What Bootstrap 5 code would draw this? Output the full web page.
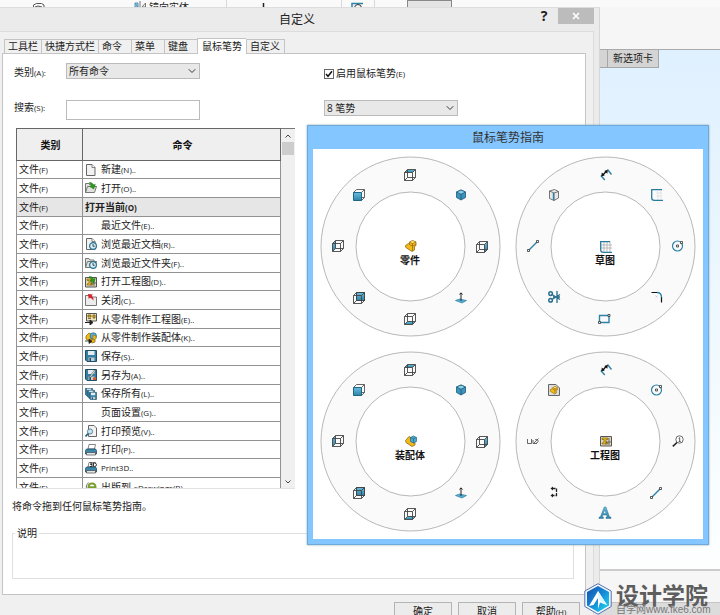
<!DOCTYPE html>
<html lang="zh-CN">
<head>
<meta charset="utf-8">
<meta name="viewport" content="width=device-width, initial-scale=1">
<title>自定义</title>
<link href="https://cdn.jsdelivr.net/npm/bootstrap@5.3.0/dist/css/bootstrap.min.css" rel="stylesheet">
<style>
body{font:10px/14px "Open Sans","Noto Sans CJK SC",sans-serif;color:#222;background:#f6f6f6}
button{font:inherit;color:inherit}
svg{display:block;flex:none}
.desk{min-height:100vh;overflow:hidden}
.ribbon{height:50px;background:#f6f6f6;border-bottom:1px solid #aaa}
.ribbon-strip{height:7px;background:#fafafa;padding-left:32px;color:#222}
.ribbon-strip .sep{width:1px;height:7px;background:#d8d8d8}
.ribbon-strip .pressed{width:45px;height:7px;background:#e4e4e4;border:1px solid #888;border-bottom:0}
.ribbon-strip .tool{line-height:14px;width:77px;height:7px}
.canvas{background:linear-gradient(#dff0ff,#f0f9ff 55%,#fdffff)}
.doc-tabs{padding-left:599px}
.doc-tab{background:#d4d4d4;border:1px solid #a6a6a6;border-width:0 1px 1px 0;height:18px;padding:0 5px;line-height:16px}
.status-a{height:33px;background:#f6f6f6;border-top:2px solid #ccc}
.status-b{height:13px;background:#dcdcdc;border-top:1px solid #c4c4c4}
.dlg{top:7px;left:0;right:120px;bottom:0;background:#ebebeb;border-top:1px solid #ddd;border-right:1px solid #d6d6d6;padding-right:5px}
.dlg-title{height:23px;font-size:12px}
.dlg-title h1{font-size:12px;line-height:23px;font-weight:400;margin:0 auto}
.title-tools{right:0;top:0}
.title-tools button{border:0;background:transparent;padding:0}
.help{width:20px;font:bold 14px/16px "Noto Sans",sans-serif!important}
.title-tools .close-x{width:36px;height:16px;background:#bcbcbc;color:#fff}
.dlg-body{background:#f0f0f0;border:1px solid #dcdcdc;border-left:0;padding:6px 7px 0 2px}
.tabs{height:15px;padding-left:2px}
.tabs button{min-width:33px;height:14px;border:1px solid #c4c4c4;border-width:1px 0 0 1px;background:#f0f0f0;padding:0 3px;line-height:13px;text-align:left;color:#222;border-radius:0}
.tabs button:last-child{border-right-width:1px;padding-right:4px}
.tabs button.active{background:#fff;height:16px;margin-bottom:-1px;padding:0 4px;position:relative}
.panel{background:#fff;border:1px solid #c4c4c4;padding:9px 11px 15px 9px}
.opts{display:grid;grid-template-columns:52px 134px 1fr;row-gap:19px;padding-left:2px;align-items:start}
.opts .right{padding-left:124px}
.hk{font-size:8px}
.opts .form-select,.opts .form-control{font-size:10px;line-height:13px;border:1px solid #bbb;border-radius:0;color:#222;min-height:0}
.opts .form-select{height:16px;padding:0 16px 0 2px;width:134px;background-color:#e8e8e8;background-size:8px 8px;background-position:right 3px center}
.opts .form-control{height:20px;padding:2px 4px}
.opts label{padding-top:2px}
.opts .find-label{padding-top:0}
.opts .tick{appearance:none;width:10px;height:10px;margin:0 2px 0 0;border:1px solid #666;background:#fff center/8px no-repeat url("data:image/svg+xml,%3Csvg xmlns='http://www.w3.org/2000/svg' viewBox='0 0 8 8'%3E%3Cpath d='M1 4l2 2.3L7 1.3' fill='none' stroke='%23111' stroke-width='1.5'/%3E%3C/svg%3E")}
.tick-row{padding-top:3px}
.opts .tick-row label{padding-top:0}
.list{width:279px;height:361px;margin:8px 0 0 4px;border-bottom:1px solid #e2e2e2;overflow:hidden}
.cmds{table-layout:fixed;border-collapse:collapse;width:265px;flex:none;align-self:flex-start}
.cmds th,.cmds td{border:1px solid #929292;padding:0 0 0 2px;line-height:14px;height:19px;white-space:nowrap}
.cmds th{height:32px;background:#efefef;text-align:center;border-color:#666;color:#111}
.cmds tbody tr:nth-child(3n+1) td{height:18px}
.cmds tr.group td{background:#e6e6e6}
.cmds col:first-child{width:66px}
.cmds .cmd{display:flex;align-items:center;gap:4px}
.cmds .cmd svg,.cmds .noicon{width:12px;height:12px;flex:none}
.scroll{background:#f0f0f0;border-top:1px solid #777}
.scroll button{border:0;background:transparent;padding:0;height:13px;display:flex;align-items:center;justify-content:center}
.thumb{height:13px;background:#cdcdcd;margin:0 1px}
.note{margin:10px 0 0}
.desc{border:1px solid #e0e0e0;height:53px;margin:13px 0 0}
.desc legend{float:none;width:auto;font-size:10px;line-height:14px;margin:0 0 0 2px;padding:0 2px;background:#fff}
.actions{padding:7px 6px 0 0;gap:6px}
.actions button{width:58px;height:18px;border:1px solid #b4b4b4;background:#ececec;border-radius:0;padding:0;line-height:14px;color:#222}
.guide{left:307px;top:125px;width:402px;background:#84c6ff;border:1px solid #6fa8da;padding:0 5px 5px;box-shadow:0 0 2px #8aa}
.guide h2{font-size:12px;line-height:23px;font-weight:400;margin:0;text-align:center;color:#333}
.rings{display:grid;grid-template-columns:1fr 1fr;background:#fff}
.rings svg{width:100%;height:auto}
.rings text{font-weight:700;font-size:10px;text-anchor:middle;fill:#111}
.brand{right:4px;bottom:0;width:132px;color:#5d5d5d}
.brand-name{font:bold 23px/22px "Noto Sans CJK SC",sans-serif}
.brand-url{font:10px/10px "Liberation Sans","Noto Sans CJK SC",sans-serif;color:#777;white-space:nowrap}
</style>
<script src="https://cdn.jsdelivr.net/npm/bootstrap@5.3.0/dist/js/bootstrap.bundle.min.js"></script>
</head>
<body>
<svg width="0" height="0" class="position-absolute" aria-hidden="true">
<defs>
<linearGradient id="teal" x2="0" y2="1"><stop stop-color="#68bddf"/><stop offset="1" stop-color="#2e83a8"/></linearGradient>
<linearGradient id="logo" x2="1" y2="1"><stop stop-color="#1550a8"/><stop offset=".5" stop-color="#1689d8"/><stop offset="1" stop-color="#20e0f0"/></linearGradient>
<g id="wire" fill="none" stroke="#444" stroke-width=".9"><path d="M.5 3.5h8v8h-8zM3.5.5h8v8h-8zM.5 3.5l3-3M8.5 3.5l3-3M8.5 11.5l3-3M.5 11.5l3-3"/></g>
<g id="c-top"><path d="M.5 3.5l3-3h8l-3 3z" fill="url(#teal)"/><use href="#wire"/></g>
<g id="c-bottom"><path d="M.5 11.5l3-3h8l-3 3z" fill="url(#teal)"/><use href="#wire"/></g>
<g id="c-left"><path d="M.5 3.5l3-3v8l-3 3z" fill="url(#teal)"/><use href="#wire"/></g>
<g id="c-right"><path d="M8.5 3.5l3-3v8l-3 3z" fill="url(#teal)"/><use href="#wire"/></g>
<g id="c-front"><path d="M3.5.5h8v8h-3M3.5.5l-3 3M8.5 3.5l3-3M11.5 8.5l-3 3" fill="none" stroke="#555" stroke-width=".9"/><path d="M.5 3.5h8v8h-8z" fill="url(#teal)" stroke="#1d6684"/></g>
<g id="c-back"><path d="M3.5.5h8v8h-8z" fill="url(#teal)" stroke="#1d6684"/><use href="#wire"/></g>
<g id="c-iso" stroke="#1c5c7c" stroke-width=".8"><path d="M6 1l4.5 2v5.500L6 11 1.500 8.500V3z" fill="#3d93ba"/><path d="M6 1l4.500 2L6 5.300 1.500 3z" fill="#8bd0ea"/><path d="M6 5.300V11"/></g>
<g id="normal"><path d="M.5 8.500l4-1.500 7 1.500-4.500 2.500z" fill="#55aed0" stroke="#2c7fa3" stroke-width=".7"/><path d="M6 9V1M4.500 2.500L6 .8l1.500 1.700" fill="none" stroke="#222"/></g>
<g id="part"><path d="M.5 5.500l3-2 1 1V2l3-1.500L11 2v3.500l-1.500 1V10L7 11.500.8 7.500z" fill="#f0b91c" stroke="#94690a" stroke-width=".8"/><path d="M4.500 4.500L7.500 6v5M7.500 6L11 4.500M4.500 2l3 1.500L11 2M7.500 3.500V6" fill="none" stroke="#94690a" stroke-width=".7"/><path d="M5 2l2.500-1L10 2 7.500 3z" fill="#ffe47c"/></g>
<g id="asm"><path d="M.5 5.500l3.500-4 2 1v4l4 1v2.500L7 11.500l-6-4z" fill="#f0b91c" stroke="#94690a" stroke-width=".8"/><path d="M5.500 2.500l3-1.500L11.500 2.500V6.500L8.500 8l-3-1.500z" fill="#4ca9cf" stroke="#246a88" stroke-width=".7"/><path d="M5.500 2.500l3 1.300 3-1.300M8.500 3.800V8" fill="none" stroke="#246a88" stroke-width=".7"/></g>
<g id="sketch"><path d="M1 4h11M1 7h11M4 1v10M7 1v10M10 0v11" stroke="#aaa" stroke-width=".8"/><path d="M10 .7H.7v8q0 2.600 2.600 2.600H12" fill="none" stroke="#287c9e" stroke-width="1.300"/></g>
<g id="rectsk"><path d="M5 4h6M5 7h6M7 2v9M10 1v9" stroke="#ddd" stroke-width=".7"/><path d="M11 .7H.7v8q0 2.600 2.600 2.600H12" fill="none" stroke="#287c9e" stroke-width="1.300"/></g>
<g id="dim"><path d="M.8 6.500l4 4.500M7.500.5l4 5" stroke="#2e83a8" stroke-width="1.400"/><path d="M2.500 6.500l4-4.500" stroke="#111" stroke-width="1.300"/><path d="M1.300 7.500l.5-4 3 2.700zM7.800.8l-.5 4-3-2.700z" fill="#111"/></g>
<g id="circ"><circle cx="5.500" cy="6" r="5" fill="none" stroke="#2e83a8" stroke-width="1.200"/><path d="M4.500 5h2v2h-2zM8.500 1.500h2v2h-2z" fill="#fff" stroke="#333" stroke-width=".8"/></g>
<g id="line"><path d="M1.500 10.500l9-9" stroke="#2e83a8" stroke-width="1.400"/><path d="M.5 9.500h2v2h-2zM9.500.5h2v2h-2z" fill="#fff" stroke="#333" stroke-width=".8"/></g>
<g id="rect"><path d="M1.500 2.500h9.500v7H1.500z" fill="none" stroke="#2e83a8" stroke-width="1.400"/><path d="M.5 8.500h2v2h-2zM10 1.500h2v2h-2z" fill="#fff" stroke="#333" stroke-width=".8"/></g>
<g id="fillet"><path d="M.5 1.500h6M10.500 6v5.500" stroke="#111" stroke-width="1.200"/><path d="M6 1.500q4.500 0 4.500 5" fill="none" stroke="#2e83a8" stroke-width="1.400"/><path d="M4.500 4.500l2 2m0-2l-2 2" stroke="#bbb" stroke-width=".6"/></g>
<g id="trim"><path d="M9 0v12M4 3.500l8 5M4 8.500l8-5M5 6h7" stroke="#276f8c" stroke-width="1.300"/><circle cx="2.600" cy="2.600" r="1.800" fill="none" stroke="#276f8c" stroke-width="1.500"/><circle cx="2.600" cy="9.300" r="1.800" fill="none" stroke="#276f8c" stroke-width="1.500"/></g>
<g id="convert"><path d="M1.500 2l5-1.500 4 2V9L6 11.500l-4.500-2z" fill="#e8e8e8" stroke="#555" stroke-width=".8"/><path d="M1.500 2L6 4l4.500-1.500M6 4v7.500" fill="none" stroke="#555" stroke-width=".8"/><path d="M5.500 4v7" stroke="#2e83a8" stroke-width="1.400"/></g>
<g id="drawing"><path d="M.5 1.500h11v9.500H.5z" fill="#ddd6bd" stroke="#555"/><path d="M2 3h6v1.500H6V7l2 1v1H2V8l2-1V4.500H2z" fill="#eab516" stroke="#76601a" stroke-width=".6"/><path d="M9 3v7M6 9.500V7h5" stroke="#444" fill="none" stroke-width=".7"/></g>
<g id="modelview"><path d="M.5.500H8l3.500 3.500v7.500H.5z" fill="#ddd" stroke="#666"/><use href="#part" transform="translate(1.700 2) scale(.7)"/></g>
<g id="balloon"><circle cx="7.500" cy="4.500" r="3.700" fill="#fff" stroke="#444" stroke-width=".8"/><path d="M6.700 3.500l1-.8v3.800M6.700 6.500h2" fill="none" stroke="#333" stroke-width=".8"/><path d="M5 7.500L.8 11.300" stroke="#222" stroke-width="1.600"/></g>
<g id="surface"><path d="M.5 4v4.500h4V4M6 8.500h4M6 8.500V5M7 8l4.500-4.500M9 8a1.800 1.800 0 1 0-1-3" stroke="#555" fill="none" stroke-width=".9"/></g>
<g id="autodim"><path d="M4 2.500h4.500v7H4" fill="none" stroke="#222" stroke-width="1.300" stroke-dasharray="3.500 1"/><path d="M2.500 2.500L5 .5v4zM2.500 9.500L5 7.500v4z" fill="#222"/></g>
<g id="letter"><path d="M5.200 0h1.800l3.600 10H12v1.500H7V10h1.300l-.7-2H3.900L3.200 10h1.200v1.500H0V10h1.300zM5.800 2.900L4.400 6.600h2.700z" fill="url(#teal)" stroke="#1f6685" stroke-width=".4" fill-rule="evenodd"/></g>
<g id="page"><path d="M1.500.5H7l3 3v8H1.500z" fill="#f1f1f1" stroke="#666"/><path d="M7 .5v3h3" fill="#fff" stroke="#666" stroke-width=".8"/></g>
<g id="clock"><circle cx="8" cy="8" r="3.400" fill="#d6eef8" stroke="#2b7292" stroke-width="1.200"/><path d="M8 6v2.300h1.700" fill="none" stroke="#222" stroke-width=".8"/></g>
<g id="folder"><path d="M.5 10.500v-9h3.500l1 1.500h4v1.500h2.500l-2 6z" fill="#e2e2dc" stroke="#777"/><path d="M.5 10.500l2-6h9" fill="none" stroke="#777"/></g>
<g id="green"><path d="M4 .8q3-1.200 4.500 2.200l1.800-.6L8.700 7 4.800 4.500l1.700-.7Q5.800 2 4 .8z" fill="#2c9b20" stroke="#16700f" stroke-width=".5"/></g>
<g id="disk"><path d="M.5.500h11v11H2L.5 10z" fill="#357fa2" stroke="#1f4f67"/><path d="M3 1h6.500v4H3z" fill="#e6edf0"/><path d="M3.500 7.500h6V11h-6z" fill="#c4ccd0"/><path d="M4.500 8h1.500v3H4.500z" fill="#1f4f67"/></g>
<g id="printer"><path d="M3 5L4 .5h6.500L9.500 5z" fill="#fff" stroke="#666" stroke-width=".8"/><path d="M1.500 5h9l1 1.500V10H.5V6.500z" fill="#3a86a8" stroke="#1f4f67" stroke-width=".8"/><path d="M1.500 8.500h9v2.500h-9z" fill="#e2e8ea" stroke="#444" stroke-width=".7"/></g>
</defs>
</svg>

<div class="desk position-relative d-flex flex-column vh-100">
  <div class="ribbon">
    <div class="ribbon-strip d-flex overflow-hidden">
      <svg width="102" height="7" viewBox="0 0 102 7"><path d="M1.500 8V5l3-1.500h5L12 5v3M3 7l3-1 4 1" fill="none" stroke="#555"/></svg>
      <svg width="15" height="7" viewBox="0 0 15 7"><path d="M1 3l3 4V3zM1 3v4h3" fill="#a6d2e8" stroke="#5593b4"/><path d="M6 1v6M11.500 3v4L8 7z" stroke="#777" fill="none"/></svg>
      <div class="tool">镜向实体</div><div class="sep"></div>
      <svg width="114" height="7" viewBox="0 0 114 7"><path d="M36.500 3v4" stroke="#222" stroke-width="1.500"/></svg><div class="sep"></div>
      <svg width="32" height="7" viewBox="0 0 32 7"><path d="M10 7V3.500h11" fill="none" stroke="#2e83a8" stroke-width="1.500"/><circle cx="16" cy="8" r="3.500" fill="none" stroke="#333"/></svg><div class="sep"></div>
      <div class="ms-4 ps-2"><div class="pressed"></div></div>
    </div>
  </div>
  <div class="canvas flex-grow-1"><div class="doc-tabs d-flex"><div class="doc-tab px-1"></div><div class="doc-tab">新选项卡</div></div></div>
  <div class="status-a"></div><div class="status-b"></div>

  <main class="dlg position-absolute d-flex flex-column">
    <header class="dlg-title d-flex position-relative">
      <h1>自定义</h1>
      <div class="title-tools position-absolute d-flex">
        <button type="button" class="help me-1" aria-label="帮助">?</button>
        <button type="button" class="close-x d-flex align-items-center justify-content-center" aria-label="关闭"><svg width="8" height="8" viewBox="0 0 8 8"><path d="M1 1l6 6M7 1L1 7" stroke="#fff" stroke-width="1.600"/></svg></button>
      </div>
    </header>
    <div class="dlg-body flex-grow-1">
      <nav class="tabs d-flex align-items-end" role="tablist">
        <button type="button" role="tab">工具栏</button><button type="button" role="tab">快捷方式栏</button><button type="button" role="tab">命令</button><button type="button" role="tab">菜单</button><button type="button" role="tab">键盘</button><button type="button" role="tab" class="active" aria-selected="true">鼠标笔势</button><button type="button" role="tab">自定义</button>
      </nav>
      <section class="panel">
        <div class="opts">
          <label for="cat">类别<span class="hk">(A):</span></label>
          <select id="cat" class="form-select"><option>所有命令</option></select>
          <div class="right d-flex align-items-center tick-row"><input type="checkbox" class="tick" id="en" checked><label for="en">启用鼠标笔势<span class="hk">(E)</span></label></div>
          <label for="find" class="find-label">搜索<span class="hk">(S):</span></label>
          <input id="find" type="text" class="form-control">
          <div class="right"><select class="form-select" aria-label="笔势数"><option>8 笔势</option></select></div>
        </div>
        <div class="list d-flex">
          <table class="cmds">
            <colgroup><col><col></colgroup>
            <thead><tr><th>类别</th><th>命令</th></tr></thead>
            <tbody>
            <tr><td>文件<span class="hk">(F)</span></td><td><div class="cmd"><svg viewBox="0 0 12 12"><use href="#page"/></svg><span>新建<span class="hk">(N)..</span></span></div></td></tr>
            <tr><td>文件<span class="hk">(F)</span></td><td><div class="cmd"><svg viewBox="0 0 12 12"><use href="#folder"/><use href="#green"/></svg><span>打开<span class="hk">(O)..</span></span></div></td></tr>
            <tr class="group"><td>文件<span class="hk">(F)</span></td><td class="fw-bold">打开当前<span class="hk">(O)</span></td></tr>
            <tr><td>文件<span class="hk">(F)</span></td><td><div class="cmd"><i class="noicon"></i><span>最近文件<span class="hk">(E)..</span></span></div></td></tr>
            <tr><td>文件<span class="hk">(F)</span></td><td><div class="cmd"><svg viewBox="0 0 12 12"><use href="#page"/><use href="#clock"/></svg><span>浏览最近文档<span class="hk">(R)..</span></span></div></td></tr>
            <tr><td>文件<span class="hk">(F)</span></td><td><div class="cmd"><svg viewBox="0 0 12 12"><use href="#folder"/><use href="#clock"/></svg><span>浏览最近文件夹<span class="hk">(F)..</span></span></div></td></tr>
            <tr><td>文件<span class="hk">(F)</span></td><td><div class="cmd"><svg viewBox="0 0 12 12"><use href="#drawing"/><use href="#green"/></svg><span>打开工程图<span class="hk">(D)..</span></span></div></td></tr>
            <tr><td>文件<span class="hk">(F)</span></td><td><div class="cmd"><svg viewBox="0 0 12 12"><path d="M.5 1.500h4l1 1.500h6v8.500H.5z" fill="#ececec" stroke="#777"/><path d="M3 0l5 .5-1.300 1.300q2 1.500 1.800 5Q7 4.500 5 3.800L3.700 5z" fill="#d3242c"/></svg><span>关闭<span class="hk">(C)..</span></span></div></td></tr>
            <tr><td>文件<span class="hk">(F)</span></td><td><div class="cmd"><svg viewBox="0 0 12 12"><path d="M1.500.5h10v7.500h-10z" fill="#eee5bd" stroke="#555"/><path d="M3 2h3v2H3zM8 2h2v3H8zM3 5.500h3" fill="#eab516" stroke="#67551a" stroke-width=".8"/><path d="M0 9.500h5M5 7l3 2.500L5 12z" fill="#222" stroke="#222"/></svg><span>从零件制作工程图<span class="hk">(E)..</span></span></div></td></tr>
            <tr><td>文件<span class="hk">(F)</span></td><td><div class="cmd"><svg viewBox="0 0 12 12"><path d="M1 4l3-3 2 1v5l4 1v2L7 11 1 7z" fill="#f0b91c" stroke="#94690a" stroke-width=".8"/><circle cx="8.300" cy="4" r="3.200" fill="#58afd0" stroke="#246a88" stroke-width=".7"/><path d="M8 3v5l3-1V4z" fill="#f0b91c" stroke="#94690a" stroke-width=".6"/><path d="M0 9h4M4 7l3 2.200L4 11.500z" fill="#222" stroke="#222" stroke-width=".8"/></svg><span>从零件制作装配体<span class="hk">(K)..</span></span></div></td></tr>
            <tr><td>文件<span class="hk">(F)</span></td><td><div class="cmd"><svg viewBox="0 0 12 12"><use href="#disk"/></svg><span>保存<span class="hk">(S)..</span></span></div></td></tr>
            <tr><td>文件<span class="hk">(F)</span></td><td><div class="cmd"><svg viewBox="0 0 12 12"><use href="#disk"/><path d="M9.500 1L5 7l-.5 2L6 8l4.500-6z" fill="#f1f1f1" stroke="#333" stroke-width=".5"/><path d="M8 8.500h3V11H8z" fill="#d45b2e"/></svg><span>另存为<span class="hk">(A)..</span></span></div></td></tr>
            <tr><td>文件<span class="hk">(F)</span></td><td><div class="cmd"><svg viewBox="0 0 12 12"><use href="#disk" transform="scale(.65)"/><use href="#disk" transform="translate(2 2) scale(.65)"/><use href="#disk" transform="translate(4 4) scale(.65)"/></svg><span>保存所有<span class="hk">(L)..</span></span></div></td></tr>
            <tr><td>文件<span class="hk">(F)</span></td><td><div class="cmd"><i class="noicon"></i><span>页面设置<span class="hk">(G)..</span></span></div></td></tr>
            <tr><td>文件<span class="hk">(F)</span></td><td><div class="cmd"><svg viewBox="0 0 12 12"><path d="M3.500.5H9l2.500 2.500v8.500h-8z" fill="#f3f3f3" stroke="#666"/><circle cx="5" cy="6.500" r="2.600" fill="#c4e4f1" stroke="#55798a" stroke-width=".9"/><path d="M3.200 8.500L.5 11.500" stroke="#245f7b" stroke-width="1.600"/></svg><span>打印预览<span class="hk">(V)..</span></span></div></td></tr>
            <tr><td>文件<span class="hk">(F)</span></td><td><div class="cmd"><svg viewBox="0 0 12 12"><use href="#printer"/></svg><span>打印<span class="hk">(P)..</span></span></div></td></tr>
            <tr><td>文件<span class="hk">(F)</span></td><td><div class="cmd"><svg viewBox="0 0 12 12"><use href="#printer"/><path d="M5 1h2v1.500H5.500 7V4.500H5M8.500 1v3.500h1q2 0 2-1.700T9.500 1z" fill="#fff" stroke="#222" stroke-width=".9"/></svg><span class="hk">Print3D..</span></div></td></tr>
            <tr><td>文件<span class="hk">(F)</span></td><td><div class="cmd"><svg viewBox="0 0 12 12"><path d="M3.500 1.500Q-1 6 3.500 10.500" fill="none" stroke="#777"/><path d="M4 6.200h6.500Q10.500 2.500 7 2.500T3.500 6.500 7 10.500q2 0 3.300-1.200" fill="none" stroke="#7a9e2e" stroke-width="2"/></svg><span>出版到 <span class="hk">eDrawings(B)..</span></span></div></td></tr>
            </tbody>
          </table>
          <div class="scroll flex-grow-1 d-flex flex-column">
            <button type="button" aria-label="向上"><svg width="6" height="4" viewBox="0 0 6 4"><path d="M.5 3.500L3 1l2.500 2.500" fill="none" stroke="#444"/></svg></button>
            <div class="thumb"></div>
            <button type="button" class="mt-auto" aria-label="向下"><svg width="6" height="4" viewBox="0 0 6 4"><path d="M.5.500L3 3 5.500.500" fill="none" stroke="#444"/></svg></button>
          </div>
        </div>
        <p class="note">将命令拖到任何鼠标笔势指南。</p>
        <fieldset class="desc"><legend>说明</legend></fieldset>
      </section>
      <div class="actions d-flex justify-content-end">
        <button type="button">确定</button><button type="button">取消</button><button type="button">帮助<span class="hk">(H)</span></button>
      </div>
    </div>
  </main>

  <section class="guide position-absolute">
    <h2>鼠标笔势指南</h2>
    <div class="rings">
      <svg viewBox="0 0 195 195"><circle cx="97.500" cy="97.500" r="89.500" fill="#fafafa" stroke="#b8b8b8"/><circle cx="97.500" cy="97.500" r="54.500" fill="#fff" stroke="#b8b8b8"/><use href="#c-top" x="91" y="20"/><use href="#c-iso" x="142" y="40"/><use href="#c-right" x="163" y="92"/><use href="#normal" x="142" y="143"/><use href="#c-bottom" x="91" y="164"/><use href="#c-back" x="40" y="143"/><use href="#c-left" x="19" y="91"/><use href="#c-front" x="40" y="40"/><use href="#part" x="92" y="91"/><text x="97" y="115">零件</text></svg>
      <svg viewBox="0 0 195 195"><circle cx="97.500" cy="97.500" r="89.500" fill="#fafafa" stroke="#b8b8b8"/><circle cx="97.500" cy="97.500" r="54.500" fill="#fff" stroke="#b8b8b8"/><use href="#dim" x="92" y="20"/><use href="#rectsk" x="143" y="40"/><use href="#circ" x="164" y="91"/><use href="#fillet" x="143" y="142"/><use href="#rect" x="90" y="164"/><use href="#trim" x="40" y="142"/><use href="#line" x="19" y="91"/><use href="#convert" x="40" y="40"/><use href="#sketch" x="92" y="92"/><text x="97" y="115">草图</text></svg>
      <svg viewBox="0 0 195 195"><circle cx="97.500" cy="97.500" r="89.500" fill="#fafafa" stroke="#b8b8b8"/><circle cx="97.500" cy="97.500" r="54.500" fill="#fff" stroke="#b8b8b8"/><use href="#c-top" x="91" y="20"/><use href="#c-iso" x="142" y="40"/><use href="#c-right" x="163" y="92"/><use href="#normal" x="142" y="143"/><use href="#c-bottom" x="91" y="164"/><use href="#c-back" x="40" y="143"/><use href="#c-left" x="19" y="91"/><use href="#c-front" x="40" y="40"/><use href="#asm" x="92" y="91"/><text x="97" y="115">装配体</text></svg>
      <svg viewBox="0 0 195 195"><circle cx="97.500" cy="97.500" r="89.500" fill="#fafafa" stroke="#b8b8b8"/><circle cx="97.500" cy="97.500" r="54.500" fill="#fff" stroke="#b8b8b8"/><use href="#dim" x="92" y="20"/><use href="#circ" x="143" y="40"/><use href="#balloon" x="164" y="91"/><use href="#line" x="142" y="143"/><use href="#letter" x="91" y="163"/><use href="#autodim" x="40" y="142"/><use href="#surface" x="19" y="91"/><use href="#modelview" x="40" y="40"/><use href="#drawing" x="92" y="91"/><text x="97" y="115">工程图</text></svg>
    </div>
  </section>

  <div class="brand position-absolute d-flex">
    <svg width="28" height="32" viewBox="0 0 28 32"><path d="M14 .7L27.200 8v15.500L14 31.300.8 23.500V8z" fill="#eef7fc" stroke="#5b6fae"/><path d="M14 3l11 6v13.500L14 29 3 22.500V9z" fill="url(#logo)"/><path d="M14 8L5 23l4.500-1 4.500-7v11l2-6.500 7 2.500z" fill="#fff"/><path d="M14 8v7l4 5 5 2z" fill="#dff6ff"/></svg>
    <div class="ps-1"><div class="brand-name">设计学院</div><div class="brand-url">自学网www.fke6.com</div></div>
  </div>
</div>
</body>
</html>
